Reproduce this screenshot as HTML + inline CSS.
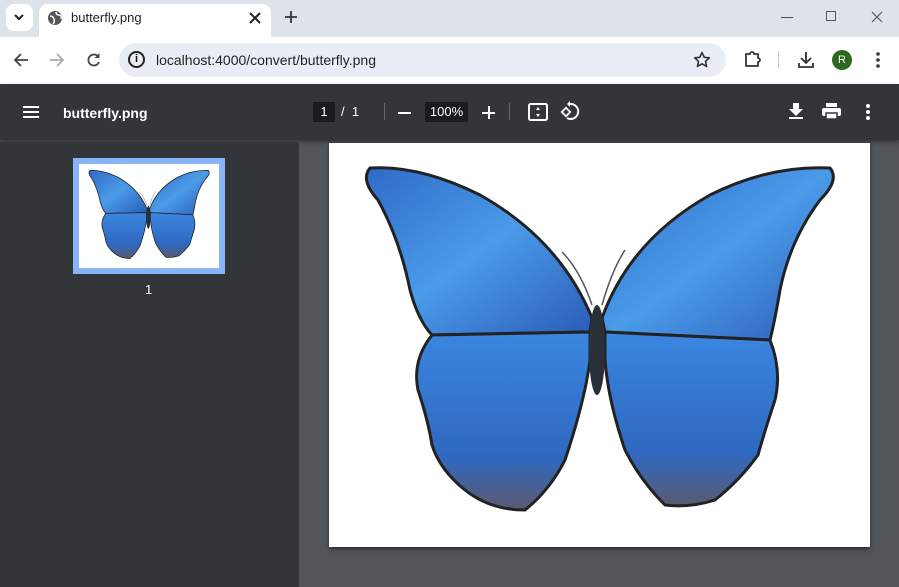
<!DOCTYPE html>
<html><head><style>
*{margin:0;padding:0;box-sizing:border-box}
body{width:899px;height:587px;overflow:hidden;font-family:"Liberation Sans",sans-serif;background:#525659;position:relative}
.abs{position:absolute}
</style></head><body>
<div class="abs" style="left:0;top:0;width:899px;height:37px;background:#dee3eb"></div>
<div class="abs" style="left:6px;top:4px;width:27px;height:27px;background:#fff;border-radius:8px"></div>
<svg class="abs" style="left:13px;top:12px" width="12" height="10"><path d="M2 3l4 4 4-4" stroke="#222" stroke-width="2" fill="none"/></svg>
<div class="abs" style="left:39px;top:4px;width:232px;height:33px;background:#fff;border-radius:9px 9px 0 0"></div>
<svg class="abs" style="left:47px;top:10px" width="16" height="16"><circle cx="8" cy="8" r="7" fill="#555"/><path d="M3 6q3 0 4 3t-1 5M9 2q0 3 3 3t2 4" stroke="#fff" stroke-width="1.5" fill="none"/></svg>
<div class="abs" style="left:71px;top:10px;font-size:13px;color:#222">butterfly.png</div>
<svg class="abs" style="left:249px;top:12px" width="12" height="12"><path d="M1 1l10 10M11 1L1 11" stroke="#222" stroke-width="2"/></svg>
<svg class="abs" style="left:285px;top:11px" width="12" height="12"><path d="M6 0v12M0 6h12" stroke="#333" stroke-width="1.8"/></svg>
<div class="abs" style="left:781px;top:17px;width:12px;height:1px;background:#555"></div>
<div class="abs" style="left:826px;top:11px;width:10px;height:10px;border:1px solid #555"></div>
<svg class="abs" style="left:871px;top:11px" width="12" height="12"><path d="M1 1l10 10M11 1L1 11" stroke="#555" stroke-width="1.2"/></svg>
<div class="abs" style="left:0;top:37px;width:899px;height:47px;background:#fff"></div>
<svg class="abs" style="left:13px;top:53px" width="16" height="14"><path d="M15 7H2M8 1L2 7l6 6" stroke="#444" stroke-width="1.8" fill="none"/></svg>
<svg class="abs" style="left:49px;top:53px" width="16" height="14"><path d="M1 7h13M8 1l6 6-6 6" stroke="#aaa" stroke-width="1.8" fill="none"/></svg>
<svg class="abs" style="left:86px;top:52px" width="16" height="16"><path d="M12.5 5A5.5 5.5 0 1 0 13 10" stroke="#444" stroke-width="1.8" fill="none"/><path d="M13.5 1v5h-5" fill="#444"/></svg>
<div class="abs" style="left:119px;top:43px;width:607px;height:34px;background:#e9edf6;border-radius:17px"></div>
<div class="abs" style="left:128px;top:51px;width:17px;height:17px;border:2px solid #222;border-radius:50%;font-size:11px;font-weight:bold;text-align:center;line-height:13px">i</div>
<div class="abs" style="left:156px;top:52px;font-size:14px;color:#222">localhost:4000/convert/butterfly.png</div>
<svg class="abs" style="left:693px;top:51px" width="18" height="17"><path d="M9 1.5l2.2 4.8 5.2.5-3.9 3.5 1.1 5.1L9 12.8 4.4 15.4l1.1-5.1L1.6 6.8l5.2-.5z" stroke="#333" stroke-width="1.6" fill="none" stroke-linejoin="round"/></svg>
<svg class="abs" style="left:743px;top:50px" width="19" height="19"><path d="M3 4h4a2 2 0 0 1 4 0h4v4a2 2 0 0 1 0 4v4H3z" stroke="#333" stroke-width="1.8" fill="none" stroke-linejoin="round"/></svg>
<div class="abs" style="left:778px;top:51px;width:1px;height:17px;background:#bcd"></div>
<svg class="abs" style="left:797px;top:51px" width="18" height="18"><path d="M9 1v11M4 7l5 5 5-5M2 12v4h14v-4" stroke="#333" stroke-width="1.8" fill="none"/></svg>
<div class="abs" style="left:832px;top:50px;width:20px;height:20px;border-radius:50%;background:#2b6a1e;color:#fff;font-size:11px;text-align:center;line-height:20px">R</div>
<svg class="abs" style="left:875px;top:52px" width="6" height="16"><circle cx="3" cy="2" r="1.8" fill="#333"/><circle cx="3" cy="8" r="1.8" fill="#333"/><circle cx="3" cy="14" r="1.8" fill="#333"/></svg>
<div class="abs" style="left:0;top:84px;width:899px;height:56px;background:#323639;box-shadow:0 2px 4px rgba(0,0,0,.4)"></div>
<div class="abs" style="left:23px;top:106px;width:16px;height:2px;background:#fff;box-shadow:0 5px 0 #fff,0 10px 0 #fff"></div>
<div class="abs" style="left:63px;top:105px;font-size:14px;font-weight:bold;color:#fff">butterfly.png</div>
<div class="abs" style="left:313px;top:102px;width:22px;height:20px;background:#191b1c;color:#fff;font-size:13px;text-align:center;line-height:20px">1</div>
<div class="abs" style="left:341px;top:104px;color:#fff;font-size:13px">/&nbsp;&nbsp;1</div>
<div class="abs" style="left:384px;top:103px;width:1px;height:17px;background:#666"></div>
<div class="abs" style="left:398px;top:112px;width:13px;height:2px;background:#fff"></div>
<div class="abs" style="left:425px;top:102px;width:43px;height:20px;background:#191b1c;color:#fff;font-size:13px;text-align:center;line-height:20px">100%</div>
<div class="abs" style="left:482px;top:112px;width:13px;height:2px;background:#fff"></div>
<div class="abs" style="left:488px;top:106px;width:2px;height:13px;background:#fff"></div>
<div class="abs" style="left:509px;top:103px;width:1px;height:17px;background:#666"></div>
<svg class="abs" style="left:528px;top:103px" width="20" height="18"><rect x="1" y="1" width="18" height="16" rx="1.5" stroke="#fff" stroke-width="2" fill="none"/><path d="M10 4l-2 3h4zM10 14l-2-3h4z" fill="#fff"/></svg>
<svg class="abs" style="left:559px;top:101px" width="21" height="21"><path d="M11 3a7.5 7.5 0 1 1-3 14" stroke="#fff" stroke-width="2" fill="none"/><path d="M11 0v6l-3-3z" fill="#fff"/><rect x="4" y="8" width="6" height="6" transform="rotate(45 7 11)" stroke="#fff" stroke-width="1.8" fill="none"/></svg>
<svg class="abs" style="left:789px;top:103px" width="14" height="16"><path d="M4 0h6v6h4l-7 7-7-7h4z" fill="#fff"/><rect x="0" y="14" width="14" height="2" fill="#fff"/></svg>
<svg class="abs" style="left:822px;top:103px" width="19" height="17"><rect x="4" y="0" width="11" height="4" fill="#fff"/><rect x="0" y="5" width="19" height="8" rx="2" fill="#fff"/><rect x="4" y="10" width="11" height="6" fill="#fff" stroke="#323639" stroke-width="1.5"/></svg>
<svg class="abs" style="left:865px;top:104px" width="6" height="16"><circle cx="3" cy="2" r="2" fill="#fff"/><circle cx="3" cy="8" r="2" fill="#fff"/><circle cx="3" cy="14" r="2" fill="#fff"/></svg>
<div class="abs" style="left:0;top:142px;width:299px;height:445px;background:#323639"></div>
<div class="abs" style="left:73px;top:158px;width:152px;height:116px;background:#8ab4f8"></div>
<div class="abs" style="left:79px;top:164px;width:140px;height:104px;background:#fff"></div>
<svg class="abs" style="left:79px;top:164px" width="140" height="104" viewBox="329 143 541 404">
<use href="#bf"/></svg>
<div class="abs" style="left:145px;top:282px;font-size:13px;color:#fff">1</div>
<div class="abs" style="left:329px;top:143px;width:541px;height:404px;background:#fff;box-shadow:0 2px 4px rgba(0,0,0,.5)"></div>
<svg class="abs" style="left:0;top:0" width="899" height="587">
<defs><linearGradient id="g" x1="0" y1="0" x2="1" y2="1"><stop offset="0" stop-color="#2f6ac8"/><stop offset=".5" stop-color="#4a9be8"/><stop offset="1" stop-color="#2b5bb8"/></linearGradient>
<linearGradient id="h" x1="0" y1="0" x2="0" y2="1"><stop offset="0" stop-color="#3a86e0"/><stop offset=".7" stop-color="#2f68c0"/><stop offset="1" stop-color="#5a5a70"/></linearGradient>
<g id="bf">
<path d="M592 318Q560 240 480 195Q420 165 370 168Q360 180 378 200Q400 240 410 290Q418 320 432 335L590 332Z" fill="url(#g)" stroke="#222" stroke-width="3"/>
<path d="M602 318Q630 240 710 195Q770 165 830 168Q840 180 820 200Q790 240 780 290Q775 320 770 340L605 332Z" fill="url(#g)" stroke="#222" stroke-width="3"/>
<path d="M590 332L432 335Q412 360 418 390Q428 420 432 445Q440 470 465 490Q490 510 525 510Q550 490 565 460Q585 400 590 360Z" fill="url(#h)" stroke="#222" stroke-width="3"/>
<path d="M605 332L770 340Q782 370 775 400Q765 430 758 455Q740 480 715 500Q690 508 665 505Q640 480 625 450Q608 400 605 360Z" fill="url(#h)" stroke="#222" stroke-width="3"/>
<ellipse cx="597" cy="350" rx="8" ry="45" fill="#2a3038"/>
<path d="M592 305Q580 270 562 252M602 305Q612 270 625 250" stroke="#555" stroke-width="1.5" fill="none"/>
</g></defs>
<use href="#bf"/>
</svg>
</body></html>
